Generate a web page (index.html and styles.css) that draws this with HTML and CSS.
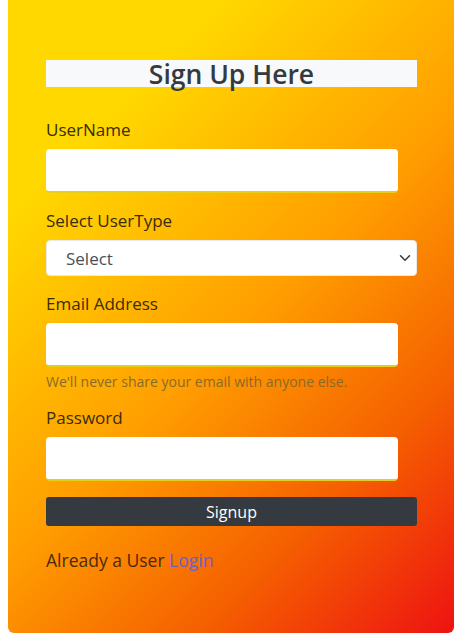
FILE: index.html
```html
<!DOCTYPE html>
<html>
<head>
<meta charset="utf-8">
<link rel="stylesheet" href="styles.css">
</head>
<body>
<div class="card">
  <h2 class="title">Sign Up Here</h2>
  <form class="form">
    <div class="group">
      <label class="label">UserName</label>
      <input class="field" type="text">
    </div>
    <div class="group">
      <label class="label">Select UserType</label>
      <div class="select-wrap">
        <select class="select"><option>Select</option></select>
        <svg class="chev" width="12" height="12" viewBox="0 0 16 16"><path d="M2 5l6 6 6-6" fill="none" stroke="#343a40" stroke-width="2" stroke-linecap="round" stroke-linejoin="round"/></svg>
      </div>
    </div>
    <div class="group">
      <label class="label">Email Address</label>
      <input class="field" type="email">
      <small class="hint">We'll never share your email with anyone else.</small>
    </div>
    <div class="group">
      <label class="label">Password</label>
      <input class="field" type="password">
    </div>
    <button class="btn" type="button">Signup</button>
    <p class="already">Already a User <a class="link" href="#">Login</a></p>
  </form>
</div>
</body>
</html>
```
FILE: styles.css
```css
html, body { margin: 0; padding: 0; background: #fff; }
body { padding: 0 10px 0 8px; font-family: "Open Sans", "Noto Sans", sans-serif; }
.card {
  height: 633px;
  box-sizing: border-box;
  padding: 60px 37px 0 38px;
  border-radius: 0 0 6px 6px;
  background: linear-gradient(135deg, #ffd800 20%, #ff9e00 52%, #f56000 76%, #ee1212 100%);
}
.title {
  margin: 0;
  height: 27px;
  line-height: 29px;
  background: #f8f9fa;
  text-align: center;
  font-size: 26.5px;
  font-weight: 600;
  color: #343a40;
  overflow: visible;
}
.form { display: flex; flex-direction: column; margin-top: 31px; }
.group { display: flex; flex-direction: column; margin-bottom: 16px; }
.label {
  font-size: 17px;
  line-height: 24px;
  color: #3a2c0c;
  margin-bottom: 7px;
}
.field {
  width: 95%;
  height: 44px;
  box-sizing: border-box;
  border: none;
  border-bottom: 2px solid #e6cf1c;
  border-radius: 4px;
  background: #fff;
  margin: 0;
}
.select-wrap { position: relative; }
.select {
  width: 100%;
  height: 36px;
  box-sizing: border-box;
  -webkit-appearance: none;
  appearance: none;
  border: 1px solid #e9e9e9;
  border-radius: 4px;
  background: #fff;
  padding: 0 19px;
  font-family: inherit;
  font-size: 17px;
  color: #495057;
}
.chev { position: absolute; right: 6px; top: 12px; }
.hint {
  margin-top: 6px;
  font-size: 14px;
  line-height: 17px;
  color: #8a6a2a;
}
.btn {
  height: 29px;
  border: none;
  border-radius: 3px;
  background: #343a40;
  color: #fff;
  font-family: inherit;
  font-size: 16px;
  padding: 0;
  margin-top: 0;
}
.already {
  margin: 22px 0 0;
  font-size: 17.5px;
  line-height: 24px;
  color: #4a2a10;
}
.link { color: #6a62cc; text-decoration: none; }
```
